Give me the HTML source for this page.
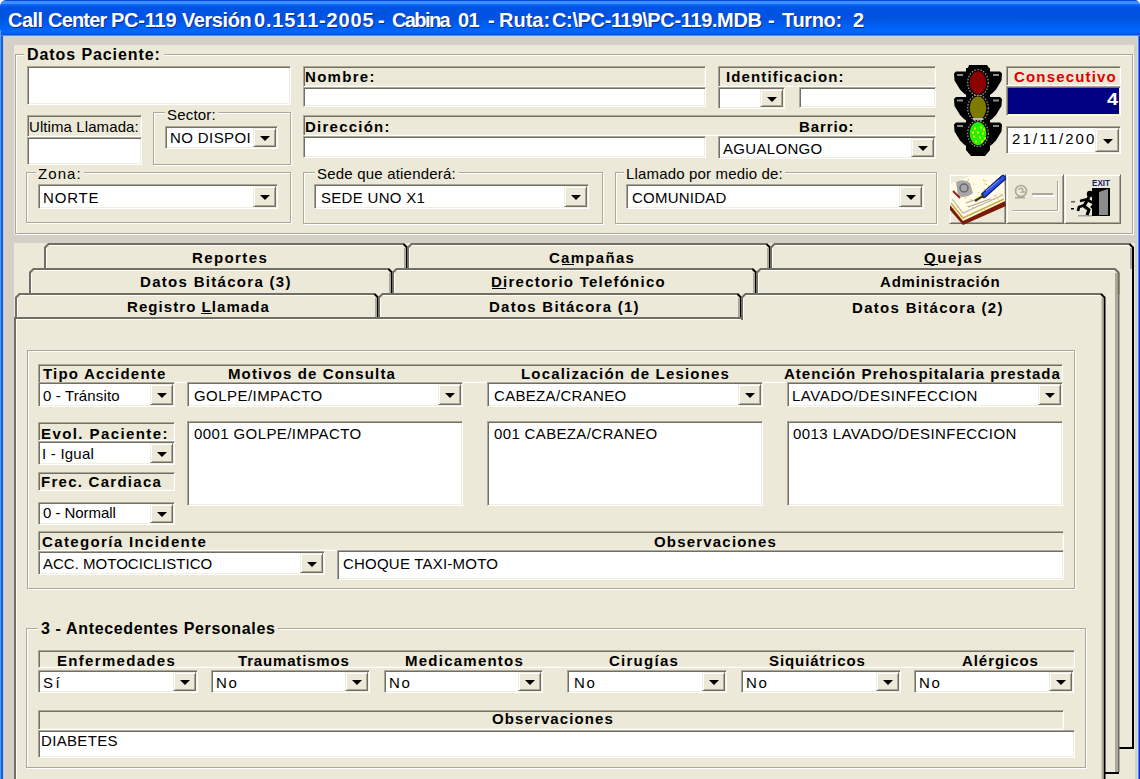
<!DOCTYPE html><html><head><meta charset="utf-8"><style>
*{margin:0;padding:0}
html,body{width:1140px;height:779px;overflow:hidden;background:#FFFFFF}
body{position:relative;font-family:"Liberation Sans",sans-serif}
.a{position:absolute;box-sizing:border-box}
.t{position:absolute;white-space:pre;line-height:1}
.sunk{border-style:solid;border-width:1px;border-color:#ACA899 #FFFFFF #FFFFFF #ACA899;box-shadow:inset 1px 1px 0 #716F64,inset -1px -1px 0 #F1EFE2}
.btn{background:#ECE9D8;border-style:solid;border-width:1px;border-color:#F1EFE2 #716F64 #716F64 #F1EFE2;box-shadow:inset 1px 1px 0 #FFFFFF,inset -1px -1px 0 #ACA899}
.grp{border:1px solid #ACA899;box-shadow:1px 1px 0 #FFFFFF,inset 1px 1px 0 #FFFFFF}
#title{background:linear-gradient(to bottom,#0A48D8 0px,#0A48D8 1px,#3C8FFF 1px,#3C8FFF 3.5px,#1068F8 4.5px,#0054E3 7px,#0052E0 18px,#0060F2 26px,#0066FF 31px,#0064FC 33px,#0A50D8 34px,#0A50D8 35px,#9CC0F4 36px)}
</style></head><body><div class="a" id="title" style="left:0;top:0;width:1140px;height:36px;border-radius:6px 5px 0 0"></div>
<div class="a" style="left:0;top:30px;width:1px;height:749px;background:#4A9AFF"></div><div class="a" style="left:1px;top:36px;width:2px;height:743px;background:#1C5CCC"></div>
<div class="a" style="left:1138px;top:36px;width:1px;height:743px;background:#4A86F0"></div><div class="a" style="left:1139px;top:36px;width:1px;height:743px;background:#0038C8"></div>
<div class="t" style="left:8.00px;top:10px;font-size:20px;font-weight:700;color:#fff;letter-spacing:-0.541px;text-shadow:1px 1px 0 #0A2A90">Call</div>
<div class="t" style="left:48.00px;top:10px;font-size:20px;font-weight:700;color:#fff;letter-spacing:-0.813px;text-shadow:1px 1px 0 #0A2A90">Center</div>
<div class="t" style="left:111.00px;top:10px;font-size:20px;font-weight:700;color:#fff;letter-spacing:-0.217px;text-shadow:1px 1px 0 #0A2A90">PC-119</div>
<div class="t" style="left:182.00px;top:10px;font-size:20px;font-weight:700;color:#fff;letter-spacing:-0.423px;text-shadow:1px 1px 0 #0A2A90">Versión</div>
<div class="t" style="left:254.00px;top:10px;font-size:20px;font-weight:700;color:#fff;letter-spacing:0.840px;text-shadow:1px 1px 0 #0A2A90">0.1511-2005</div>
<div class="t" style="left:378.00px;top:10px;font-size:20px;font-weight:700;color:#fff;letter-spacing:0.000px;text-shadow:1px 1px 0 #0A2A90">-</div>
<div class="t" style="left:392.00px;top:10px;font-size:20px;font-weight:700;color:#fff;letter-spacing:-1.611px;text-shadow:1px 1px 0 #0A2A90">Cabina</div>
<div class="t" style="left:458.00px;top:10px;font-size:20px;font-weight:700;color:#fff;letter-spacing:-0.623px;text-shadow:1px 1px 0 #0A2A90">01</div>
<div class="t" style="left:488.00px;top:10px;font-size:20px;font-weight:700;color:#fff;letter-spacing:0.000px;text-shadow:1px 1px 0 #0A2A90">-</div>
<div class="t" style="left:499.00px;top:10px;font-size:20px;font-weight:700;color:#fff;letter-spacing:0.014px;text-shadow:1px 1px 0 #0A2A90">Ruta:</div>
<div class="t" style="left:552.00px;top:10px;font-size:20px;font-weight:700;color:#fff;letter-spacing:-0.358px;text-shadow:1px 1px 0 #0A2A90">C:\PC-119\PC-119.MDB</div>
<div class="t" style="left:768.00px;top:10px;font-size:20px;font-weight:700;color:#fff;letter-spacing:0.000px;text-shadow:1px 1px 0 #0A2A90">-</div>
<div class="t" style="left:782.00px;top:10px;font-size:20px;font-weight:700;color:#fff;letter-spacing:-0.333px;text-shadow:1px 1px 0 #0A2A90">Turno:</div>
<div class="t" style="left:853.00px;top:10px;font-size:20px;font-weight:700;color:#fff;letter-spacing:0.000px;text-shadow:1px 1px 0 #0A2A90">2</div>
<div class="a" style="left:3px;top:36px;width:1135px;height:743px;background:#D4D0C8"></div>
<div class="a" style="left:3px;top:36px;width:1135px;height:1px;background:#C4D6F4"></div>
<div class="a" style="left:3px;top:36px;width:1px;height:743px;background:#B0CAF0"></div><div class="a" style="left:1137px;top:36px;width:1px;height:743px;background:#C8D8F0"></div>
<div class="a" style="left:4px;top:37px;width:2px;height:742px;background:#DCCFBC"></div>
<div class="a" style="left:14px;top:45px;width:1120px;height:190px;background:#ECE9D8"></div>
<div class="a grp" style="left:15px;top:54px;width:1118px;height:180px;"></div>
<div class="t" style="left:27.00px;top:47px;font-size:16px;font-weight:700;color:#000;letter-spacing:0.914px;background:#ECE9D8;padding:0 3px;margin-left:-3px">Datos Paciente:</div>
<div class="a sunk" style="left:27px;top:66px;width:264px;height:39px;background:#fff"></div>
<div class="a sunk" style="left:27px;top:115px;width:115px;height:22px;background:#ECE9D8"></div>
<div class="t" style="left:29.00px;top:119px;font-size:15px;font-weight:400;color:#000;letter-spacing:0.092px;">Ultima Llamada:</div>
<div class="a sunk" style="left:27px;top:137px;width:115px;height:28px;background:#fff"></div>
<div class="a grp" style="left:153px;top:112px;width:138px;height:53px;"></div>
<div class="t" style="left:167.00px;top:107px;font-size:15px;font-weight:400;color:#000;letter-spacing:0.191px;background:#ECE9D8;padding:0 2px;margin-left:-2px">Sector:</div>
<div class="a sunk" style="left:165px;top:126px;width:113px;height:23px;background:#fff"></div>
<div class="t" style="left:170.00px;top:130px;font-size:15px;font-weight:400;color:#000;letter-spacing:0.394px;">NO DISPOI</div>
<div class="a btn" style="left:253px;top:128px;width:23px;height:19px;"></div>
<div class="a" style="left:260px;top:136px;width:0;height:0;border-left:5px solid transparent;border-right:5px solid transparent;border-top:5.5px solid #000"></div>
<div class="a grp" style="left:26px;top:172px;width:265px;height:51px;"></div>
<div class="t" style="left:38.00px;top:166px;font-size:15px;font-weight:400;color:#000;letter-spacing:1.078px;background:#ECE9D8;padding:0 2px;margin-left:-2px">Zona:</div>
<div class="a sunk" style="left:38px;top:184px;width:240px;height:25px;background:#fff"></div>
<div class="t" style="left:43.00px;top:190px;font-size:15px;font-weight:400;color:#000;letter-spacing:0.819px;">NORTE</div>
<div class="a btn" style="left:253px;top:186px;width:23px;height:21px;"></div>
<div class="a" style="left:260px;top:195px;width:0;height:0;border-left:5px solid transparent;border-right:5px solid transparent;border-top:5.5px solid #000"></div>
<div class="a sunk" style="left:303px;top:66px;width:403px;height:21px;background:#ECE9D8"></div>
<div class="t" style="left:305.00px;top:69px;font-size:15px;font-weight:700;color:#000;letter-spacing:1.304px;">Nombre:</div>
<div class="a sunk" style="left:303px;top:87px;width:403px;height:20px;background:#fff"></div>
<div class="a sunk" style="left:718px;top:66px;width:218px;height:21px;background:#ECE9D8"></div>
<div class="t" style="left:726.00px;top:69px;font-size:15px;font-weight:700;color:#000;letter-spacing:1.130px;">Identificacion:</div>
<div class="a sunk" style="left:718px;top:87px;width:67px;height:22px;background:#fff"></div>
<div class="a btn" style="left:760px;top:89px;width:23px;height:18px;"></div>
<div class="a" style="left:767px;top:97px;width:0;height:0;border-left:5px solid transparent;border-right:5px solid transparent;border-top:5.5px solid #000"></div>
<div class="a sunk" style="left:799px;top:87px;width:137px;height:21px;background:#fff"></div>
<div class="a sunk" style="left:303px;top:115px;width:633px;height:21px;background:#ECE9D8"></div>
<div class="t" style="left:305.00px;top:119px;font-size:15px;font-weight:700;color:#000;letter-spacing:1.238px;">Dirección:</div>
<div class="t" style="left:799.00px;top:119px;font-size:15px;font-weight:700;color:#000;letter-spacing:0.887px;">Barrio:</div>
<div class="a sunk" style="left:303px;top:136px;width:403px;height:22px;background:#fff"></div>
<div class="a sunk" style="left:718px;top:136px;width:218px;height:23px;background:#fff"></div>
<div class="t" style="left:723.00px;top:141px;font-size:15px;font-weight:400;color:#000;letter-spacing:0.310px;">AGUALONGO</div>
<div class="a btn" style="left:911px;top:138px;width:23px;height:19px;"></div>
<div class="a" style="left:918px;top:146px;width:0;height:0;border-left:5px solid transparent;border-right:5px solid transparent;border-top:5.5px solid #000"></div>
<div class="a grp" style="left:303px;top:172px;width:300px;height:52px;"></div>
<div class="t" style="left:317.00px;top:166px;font-size:15px;font-weight:400;color:#000;letter-spacing:0.198px;background:#ECE9D8;padding:0 2px;margin-left:-2px">Sede que atienderá:</div>
<div class="a sunk" style="left:314px;top:184px;width:275px;height:25px;background:#fff"></div>
<div class="t" style="left:321.00px;top:190px;font-size:15px;font-weight:400;color:#000;letter-spacing:0.298px;">SEDE UNO X1</div>
<div class="a btn" style="left:564px;top:186px;width:23px;height:21px;"></div>
<div class="a" style="left:571px;top:195px;width:0;height:0;border-left:5px solid transparent;border-right:5px solid transparent;border-top:5.5px solid #000"></div>
<div class="a grp" style="left:615px;top:172px;width:322px;height:52px;"></div>
<div class="t" style="left:626.00px;top:166px;font-size:15px;font-weight:400;color:#000;letter-spacing:0.162px;background:#ECE9D8;padding:0 2px;margin-left:-2px">Llamado por medio de:</div>
<div class="a sunk" style="left:626px;top:184px;width:298px;height:25px;background:#fff"></div>
<div class="t" style="left:632.00px;top:190px;font-size:15px;font-weight:400;color:#000;letter-spacing:0.229px;">COMUNIDAD</div>
<div class="a btn" style="left:899px;top:186px;width:23px;height:21px;"></div>
<div class="a" style="left:906px;top:195px;width:0;height:0;border-left:5px solid transparent;border-right:5px solid transparent;border-top:5.5px solid #000"></div>
<svg class="a" style="left:950px;top:62px" width="56" height="98"><polygon points="19,3 37,3 39,6 40,6 40,88 35,94 21,94 16,88 16,6 18,6" fill="#000" /><polygon points="6,9.5 17,9.5 17,33.5 14,31.5 10,27.5 7,22.5 4.5,18.5 4,11.5" fill="#000" /><polygon points="50,9.5 39,9.5 39,33.5 42,31.5 46,27.5 49,22.5 51.5,18.5 52,11.5" fill="#000" /><rect x="7" y="12.0" width="6" height="2" fill="#8a8a8a"/><rect x="43" y="12.0" width="6" height="2" fill="#8a8a8a"/><polygon points="6,35 17,35 17,59 14,57 10,53 7,48 4.5,44 4,37" fill="#000" /><polygon points="50,35 39,35 39,59 42,57 46,53 49,48 51.5,44 52,37" fill="#000" /><rect x="7" y="37.5" width="6" height="2" fill="#8a8a8a"/><rect x="43" y="37.5" width="6" height="2" fill="#8a8a8a"/><polygon points="6,60.5 17,60.5 17,84.5 14,82.5 10,78.5 7,73.5 4.5,69.5 4,62.5" fill="#000" /><polygon points="50,60.5 39,60.5 39,84.5 42,82.5 46,78.5 49,73.5 51.5,69.5 52,62.5" fill="#000" /><rect x="7" y="63.0" width="6" height="2" fill="#8a8a8a"/><rect x="43" y="63.0" width="6" height="2" fill="#8a8a8a"/><ellipse cx="28" cy="20.700000000000003" rx="10.3" ry="13" fill="none" stroke="#9A9A9A" stroke-width="1.2" stroke-dasharray="1.6 1.4"/><ellipse cx="28" cy="20.700000000000003" rx="8.3" ry="11.5" fill="#8B0000"/><ellipse cx="28" cy="46" rx="10.3" ry="13" fill="none" stroke="#9A9A9A" stroke-width="1.2" stroke-dasharray="1.6 1.4"/><ellipse cx="28" cy="46" rx="8.3" ry="11.5" fill="#7E7A00"/><ellipse cx="28" cy="71.5" rx="10.3" ry="13" fill="none" stroke="#9A9A9A" stroke-width="1.2" stroke-dasharray="1.6 1.4"/><ellipse cx="28" cy="71.5" rx="8.3" ry="11.5" fill="#22EE00"/><rect x="24" y="65.5" width="2" height="2" fill="#E8F000"/><rect x="30" y="64.5" width="2" height="2" fill="#E8F000"/><rect x="27" y="69.5" width="2" height="2" fill="#E8F000"/><rect x="32" y="70.5" width="2" height="2" fill="#E8F000"/><rect x="23" y="73.5" width="2" height="2" fill="#E8F000"/><rect x="29" y="74.5" width="2" height="2" fill="#E8F000"/><rect x="25" y="78.5" width="2" height="2" fill="#E8F000"/><rect x="31" y="78.5" width="2" height="2" fill="#E8F000"/><rect x="33" y="66.5" width="2" height="2" fill="#E8F000"/><rect x="22" y="69.5" width="2" height="2" fill="#E8F000"/><rect x="34" y="75.5" width="2" height="2" fill="#E8F000"/><rect x="23" y="56" width="10" height="2" fill="#b8b8b8"/></svg>
<div class="a sunk" style="left:1006px;top:66px;width:115px;height:20px;background:#ECE9D8"></div>
<div class="t" style="left:1014.00px;top:69px;font-size:15px;font-weight:700;color:#E00000;letter-spacing:1.165px;">Consecutivo</div>
<div class="a sunk" style="left:1006px;top:86px;width:115px;height:30px;background:#000080"></div>
<div class="t" style="left:1107.00px;top:92px;font-size:16px;font-weight:700;color:#fff;letter-spacing:0.000px;transform:scaleX(1.25);transform-origin:0 0">4</div>
<div class="a sunk" style="left:1006px;top:126px;width:115px;height:28px;background:#fff"></div>
<div class="t" style="left:1012.00px;top:131px;font-size:15px;font-weight:400;color:#000;letter-spacing:2.098px;">21/11/2005</div>
<div class="a btn" style="left:1095px;top:128px;width:24px;height:24px;"></div>
<div class="a" style="left:1103px;top:139px;width:0;height:0;border-left:5px solid transparent;border-right:5px solid transparent;border-top:5.5px solid #000"></div>
<div class="a btn" style="left:949px;top:174px;width:57px;height:50px;"></div>
<div class="a btn" style="left:1006px;top:174px;width:58px;height:50px;"></div>
<div class="a btn" style="left:1064px;top:174px;width:57px;height:50px;"></div>
<svg class="a" style="left:0;top:0" width="1140" height="779"><polygon points="951,183 971,176 1004,176 1005,202 963,221 951,206" fill="#FFFBE6"/><rect x="964.7" y="197.6" width="1.2" height="1.2" fill="#D8C860"/><rect x="971.1" y="199.7" width="1.2" height="1.2" fill="#D8C860"/><rect x="983.7" y="180.4" width="1.2" height="1.2" fill="#D8C860"/><rect x="953.6" y="208.1" width="1.2" height="1.2" fill="#D8C860"/><rect x="965.7" y="186.4" width="1.2" height="1.2" fill="#D8C860"/><rect x="1001.8" y="194.9" width="1.2" height="1.2" fill="#D8C860"/><rect x="994.0" y="195.1" width="1.2" height="1.2" fill="#D8C860"/><rect x="984.3" y="183.4" width="1.2" height="1.2" fill="#D8C860"/><rect x="984.1" y="209.2" width="1.2" height="1.2" fill="#D8C860"/><rect x="978.6" y="204.7" width="1.2" height="1.2" fill="#D8C860"/><rect x="985.9" y="180.3" width="1.2" height="1.2" fill="#D8C860"/><rect x="990.2" y="199.3" width="1.2" height="1.2" fill="#D8C860"/><rect x="967.8" y="179.1" width="1.2" height="1.2" fill="#D8C860"/><rect x="995.4" y="195.0" width="1.2" height="1.2" fill="#D8C860"/><rect x="972.4" y="206.8" width="1.2" height="1.2" fill="#D8C860"/><rect x="974.8" y="211.7" width="1.2" height="1.2" fill="#D8C860"/><rect x="996.1" y="181.5" width="1.2" height="1.2" fill="#D8C860"/><rect x="959.7" y="185.8" width="1.2" height="1.2" fill="#D8C860"/><rect x="1000.3" y="193.7" width="1.2" height="1.2" fill="#D8C860"/><rect x="983.7" y="188.8" width="1.2" height="1.2" fill="#D8C860"/><rect x="977.9" y="191.9" width="1.2" height="1.2" fill="#D8C860"/><rect x="970.2" y="199.1" width="1.2" height="1.2" fill="#D8C860"/><rect x="981.6" y="210.6" width="1.2" height="1.2" fill="#D8C860"/><rect x="985.9" y="183.9" width="1.2" height="1.2" fill="#D8C860"/><rect x="997.3" y="198.5" width="1.2" height="1.2" fill="#D8C860"/><rect x="988.0" y="185.6" width="1.2" height="1.2" fill="#D8C860"/><rect x="993.7" y="198.6" width="1.2" height="1.2" fill="#D8C860"/><rect x="967.0" y="180.3" width="1.2" height="1.2" fill="#D8C860"/><rect x="957.3" y="206.8" width="1.2" height="1.2" fill="#D8C860"/><rect x="973.1" y="183.4" width="1.2" height="1.2" fill="#D8C860"/><rect x="967.4" y="205.7" width="1.2" height="1.2" fill="#D8C860"/><rect x="995.8" y="179.6" width="1.2" height="1.2" fill="#D8C860"/><rect x="983.1" y="179.6" width="1.2" height="1.2" fill="#D8C860"/><rect x="988.2" y="189.9" width="1.2" height="1.2" fill="#D8C860"/><polygon points="950,205 963,221 1005,201 1006,206 963,225 950,210" fill="#7A1A08"/><polyline points="951,203 963,218 1004,199" fill="none" stroke="#C8B040" stroke-width="1.5"/><polyline points="952,199 963,213 1003,195" fill="none" stroke="#B8B4A0" stroke-width="1.2"/><path d="M956 182Q963 178 970 183L973 193Q966 199 958 196Z" fill="#A8A8A8"/><circle cx="964" cy="188" r="4" fill="none" stroke="#6A6A6A" stroke-width="1.5"/><path d="M953 191L960 198" stroke="#9A2020" stroke-width="2"/><path d="M966 203L986 196M968 207L990 199" stroke="#A8A8A0" stroke-width="1.2"/><path d="M984 195L1003 178" stroke="#10187A" stroke-width="6" stroke-linecap="round"/><path d="M984 195L1003 178" stroke="#2A52E8" stroke-width="3.6" stroke-linecap="round"/><path d="M986 191L999 180" stroke="#8AA8FF" stroke-width="1"/><path d="M975 201L984 195" stroke="#303000" stroke-width="2.2"/><path d="M977 198L982 195" stroke="#D8D070" stroke-width="1"/><path d="M1013.5 211.5H1058.5V182" fill="none" stroke="#FFFFFF"/><path d="M1012.5 210.5H1057.5V181" fill="none" stroke="#ACA899"/><rect x="1033" y="195" width="22" height="2" fill="#FFFFFF"/><rect x="1032" y="193" width="21" height="2" fill="#ACA899"/><circle cx="1021" cy="191" r="5.5" fill="none" stroke="#ACA899" stroke-width="1.6"/><path d="M1019 190a2 2 0 1 1 3 2h3" fill="none" stroke="#ACA899" stroke-width="1.3"/><rect x="1015" y="197" width="10" height="1.5" fill="#ACA899"/><text x="1092" y="185.5" font-family="Liberation Sans" font-weight="700" font-size="8.5" fill="#14206E" textLength="18" lengthAdjust="spacingAndGlyphs">EXIT</text><rect x="1092" y="188" width="18" height="28" fill="#000"/><polygon points="1099,192 1108,189 1108,215 1099,215" fill="#8C8C8C"/><rect x="1078" y="215" width="14" height="1.5" fill="#A0A0A0"/><circle cx="1090" cy="194" r="3.2" fill="#000"/><path d="M1089 197L1084 206L1089 210L1087 215" fill="none" stroke="#000" stroke-width="3.2" stroke-linejoin="round"/><path d="M1085 205L1079 207L1078 211" fill="none" stroke="#000" stroke-width="2.8" stroke-linejoin="round"/><path d="M1088 199L1080 201M1087 200L1096 204" fill="none" stroke="#000" stroke-width="2.5"/><path d="M1091 206L1096 211L1093 215" fill="none" stroke="#000" stroke-width="2.5"/><rect x="1071" y="201" width="4" height="1.5" fill="#606060"/><rect x="1071" y="208" width="3" height="1.5" fill="#000"/></svg>
<div class="a" style="left:14px;top:243px;width:1121px;height:536px;background:#ECE9D8"></div>
<svg class="a" style="left:0;top:0" width="1140" height="779" fill="none"><path d="M1133 248V748H1119" stroke="#000000" stroke-width="2"/><path d="M1116 273V772" stroke="#ACA899" stroke-width="2"/><path d="M1118.5 273V772" stroke="#716F64" stroke-width="2"/><path d="M1105 773H1119" stroke="#000000" stroke-width="2"/><path d="M45 269V247.5L48.5 244H404" stroke="#716F64" stroke-width="2"/><path d="M46.5 269V248M49 245.5H403" stroke="#FFFFFF"/><path d="M403.5 244L407 247.5V269" stroke="#000000" stroke-width="2"/><path d="M405 248V269" stroke="#ACA899" stroke-width="2"/><path d="M408 269V247.5L411.5 244H767" stroke="#716F64" stroke-width="2"/><path d="M409.5 269V248M412 245.5H766" stroke="#FFFFFF"/><path d="M766.5 244L770 247.5V269" stroke="#000000" stroke-width="2"/><path d="M768 248V269" stroke="#ACA899" stroke-width="2"/><path d="M771 269V247.5L774.5 244H1130" stroke="#716F64" stroke-width="2"/><path d="M772.5 269V248M775 245.5H1129" stroke="#FFFFFF"/><path d="M1129.5 244L1133 247.5V269" stroke="#000000" stroke-width="2"/><path d="M1131 248V269" stroke="#ACA899" stroke-width="2"/><path d="M30 294V272.5L33.5 269H389" stroke="#716F64" stroke-width="2"/><path d="M31.5 294V273M34 270.5H388" stroke="#FFFFFF"/><path d="M388.5 269L392 272.5V294" stroke="#000000" stroke-width="2"/><path d="M390 273V294" stroke="#ACA899" stroke-width="2"/><path d="M393 294V272.5L396.5 269H753" stroke="#716F64" stroke-width="2"/><path d="M394.5 294V273M397 270.5H752" stroke="#FFFFFF"/><path d="M752.5 269L756 272.5V294" stroke="#000000" stroke-width="2"/><path d="M754 273V294" stroke="#ACA899" stroke-width="2"/><path d="M757 294V272.5L760.5 269H1115.5" stroke="#716F64" stroke-width="2"/><path d="M758.5 294V273M761 270.5H1114.5" stroke="#FFFFFF"/><path d="M1115.0 269L1118.5 272.5V294" stroke="#716F64" stroke-width="2"/><path d="M1116.5 273V294" stroke="#ACA899" stroke-width="2"/><path d="M16 318V297.5L19.5 294H375" stroke="#716F64" stroke-width="2"/><path d="M17.5 318V298M20 295.5H374" stroke="#FFFFFF"/><path d="M374.5 294L378 297.5V318" stroke="#000000" stroke-width="2"/><path d="M376 298V318" stroke="#ACA899" stroke-width="2"/><path d="M379 318V297.5L382.5 294H738" stroke="#716F64" stroke-width="2"/><path d="M380.5 318V298M383 295.5H737" stroke="#FFFFFF"/><path d="M737.5 294L741 297.5V318" stroke="#000000" stroke-width="2"/><path d="M739 298V318" stroke="#ACA899" stroke-width="2"/><path d="M15 779V318H742" stroke="#716F64" stroke-width="2"/><path d="M16.5 779V319.5H742" stroke="#FFFFFF"/><path d="M742 320V297.5L745.5 294H1101.5" stroke="#716F64" stroke-width="2"/><path d="M743.5 320V298M746 295.5H1100.5" stroke="#FFFFFF"/><path d="M1101.0 294L1104.5 297.5V779" stroke="#000000" stroke-width="2"/><path d="M1102.5 298V779" stroke="#ACA899" stroke-width="2"/></svg>
<div class="t" style="left:192.00px;top:250px;font-size:15px;font-weight:700;color:#000;letter-spacing:1.404px;">Reportes</div>
<div class="t" style="left:549.00px;top:250px;font-size:15px;font-weight:700;color:#000;letter-spacing:1.283px;">Campañas</div>
<div class="t" style="left:924.00px;top:250px;font-size:15px;font-weight:700;color:#000;letter-spacing:1.564px;">Quejas</div>
<div class="t" style="left:140.00px;top:274px;font-size:15px;font-weight:700;color:#000;letter-spacing:1.302px;">Datos Bitácora (3)</div>
<div class="t" style="left:491.00px;top:274px;font-size:15px;font-weight:700;color:#000;letter-spacing:1.238px;">Directorio Telefónico</div>
<div class="t" style="left:880.00px;top:274px;font-size:15px;font-weight:700;color:#000;letter-spacing:0.806px;">Administración</div>
<div class="t" style="left:127.00px;top:299px;font-size:15px;font-weight:700;color:#000;letter-spacing:1.065px;">Registro Llamada</div>
<div class="t" style="left:489.00px;top:299px;font-size:15px;font-weight:700;color:#000;letter-spacing:1.243px;">Datos Bitácora (1)</div>
<div class="t" style="left:852.00px;top:300px;font-size:15px;font-weight:700;color:#000;letter-spacing:1.302px;">Datos Bitácora (2)</div>
<div class="a" style="left:201px;top:313px;width:11px;height:1px;background:#000"></div>
<div class="a" style="left:562px;top:264px;width:12px;height:1px;background:#000"></div>
<div class="a" style="left:492px;top:288px;width:14px;height:1px;background:#000"></div>
<div class="a" style="left:924px;top:264px;width:14px;height:1px;background:#000"></div>
<div class="a grp" style="left:27px;top:350px;width:1048px;height:239px;"></div>
<div class="a sunk" style="left:38px;top:364px;width:1025px;height:19px;background:#ECE9D8"></div>
<div class="t" style="left:43.00px;top:366px;font-size:15px;font-weight:700;color:#000;letter-spacing:1.200px;">Tipo Accidente</div>
<div class="t" style="left:228.00px;top:366px;font-size:15px;font-weight:700;color:#000;letter-spacing:1.120px;">Motivos de Consulta</div>
<div class="t" style="left:521.00px;top:366px;font-size:15px;font-weight:700;color:#000;letter-spacing:1.172px;">Localización de Lesiones</div>
<div class="t" style="left:784.00px;top:366px;font-size:15px;font-weight:700;color:#000;letter-spacing:1.014px;">Atención Prehospitalaria prestada</div>
<div class="a sunk" style="left:38px;top:382px;width:137px;height:25px;background:#fff"></div>
<div class="t" style="left:43.00px;top:388px;font-size:15px;font-weight:400;color:#000;letter-spacing:0.140px;">0 - Tránsito</div>
<div class="a btn" style="left:150px;top:384px;width:23px;height:21px;"></div>
<div class="a" style="left:157px;top:393px;width:0;height:0;border-left:5px solid transparent;border-right:5px solid transparent;border-top:5.5px solid #000"></div>
<div class="a sunk" style="left:187px;top:382px;width:276px;height:25px;background:#fff"></div>
<div class="t" style="left:194.00px;top:388px;font-size:15px;font-weight:400;color:#000;letter-spacing:0.447px;">GOLPE/IMPACTO</div>
<div class="a btn" style="left:438px;top:384px;width:23px;height:21px;"></div>
<div class="a" style="left:445px;top:393px;width:0;height:0;border-left:5px solid transparent;border-right:5px solid transparent;border-top:5.5px solid #000"></div>
<div class="a sunk" style="left:487px;top:382px;width:276px;height:25px;background:#fff"></div>
<div class="t" style="left:494.00px;top:388px;font-size:15px;font-weight:400;color:#000;letter-spacing:0.318px;">CABEZA/CRANEO</div>
<div class="a btn" style="left:738px;top:384px;width:23px;height:21px;"></div>
<div class="a" style="left:745px;top:393px;width:0;height:0;border-left:5px solid transparent;border-right:5px solid transparent;border-top:5.5px solid #000"></div>
<div class="a sunk" style="left:787px;top:382px;width:276px;height:25px;background:#fff"></div>
<div class="t" style="left:792.00px;top:388px;font-size:15px;font-weight:400;color:#000;letter-spacing:0.511px;">LAVADO/DESINFECCION</div>
<div class="a btn" style="left:1038px;top:384px;width:23px;height:21px;"></div>
<div class="a" style="left:1045px;top:393px;width:0;height:0;border-left:5px solid transparent;border-right:5px solid transparent;border-top:5.5px solid #000"></div>
<div class="a sunk" style="left:38px;top:422px;width:137px;height:19px;background:#ECE9D8"></div>
<div class="t" style="left:41.00px;top:426px;font-size:15px;font-weight:700;color:#000;letter-spacing:1.413px;">Evol. Paciente:</div>
<div class="a sunk" style="left:38px;top:441px;width:137px;height:24px;background:#fff"></div>
<div class="t" style="left:42.00px;top:446px;font-size:15px;font-weight:400;color:#000;letter-spacing:0.226px;">I - Igual</div>
<div class="a btn" style="left:150px;top:443px;width:23px;height:20px;"></div>
<div class="a" style="left:157px;top:452px;width:0;height:0;border-left:5px solid transparent;border-right:5px solid transparent;border-top:5.5px solid #000"></div>
<div class="a sunk" style="left:38px;top:472px;width:137px;height:19px;background:#ECE9D8"></div>
<div class="t" style="left:41.00px;top:474px;font-size:15px;font-weight:700;color:#000;letter-spacing:1.266px;">Frec. Cardiaca</div>
<div class="a sunk" style="left:38px;top:502px;width:137px;height:23px;background:#fff"></div>
<div class="t" style="left:43.00px;top:505px;font-size:15px;font-weight:400;color:#000;letter-spacing:-0.051px;">0 - Normall</div>
<div class="a btn" style="left:150px;top:504px;width:23px;height:19px;"></div>
<div class="a" style="left:157px;top:512px;width:0;height:0;border-left:5px solid transparent;border-right:5px solid transparent;border-top:5.5px solid #000"></div>
<div class="a sunk" style="left:187px;top:421px;width:276px;height:85px;background:#fff"></div>
<div class="t" style="left:194.00px;top:426px;font-size:15px;font-weight:400;color:#000;letter-spacing:0.402px;">0001 GOLPE/IMPACTO</div>
<div class="a sunk" style="left:487px;top:421px;width:276px;height:85px;background:#fff"></div>
<div class="t" style="left:494.00px;top:426px;font-size:15px;font-weight:400;color:#000;letter-spacing:0.351px;">001 CABEZA/CRANEO</div>
<div class="a sunk" style="left:787px;top:421px;width:276px;height:85px;background:#fff"></div>
<div class="t" style="left:793.00px;top:426px;font-size:15px;font-weight:400;color:#000;letter-spacing:0.420px;">0013 LAVADO/DESINFECCION</div>
<div class="a sunk" style="left:38px;top:531px;width:1026px;height:20px;background:#ECE9D8"></div>
<div class="t" style="left:42.00px;top:534px;font-size:15px;font-weight:700;color:#000;letter-spacing:1.369px;">Categoría Incidente</div>
<div class="t" style="left:654.00px;top:534px;font-size:15px;font-weight:700;color:#000;letter-spacing:1.191px;">Observaciones</div>
<div class="a sunk" style="left:38px;top:551px;width:287px;height:24px;background:#fff"></div>
<div class="t" style="left:43.00px;top:556px;font-size:15px;font-weight:400;color:#000;letter-spacing:0.015px;">ACC. MOTOCICLISTICO</div>
<div class="a btn" style="left:300px;top:553px;width:23px;height:20px;"></div>
<div class="a" style="left:307px;top:562px;width:0;height:0;border-left:5px solid transparent;border-right:5px solid transparent;border-top:5.5px solid #000"></div>
<div class="a sunk" style="left:337px;top:550px;width:727px;height:30px;background:#fff"></div>
<div class="t" style="left:343.00px;top:556px;font-size:15px;font-weight:400;color:#000;letter-spacing:0.215px;">CHOQUE TAXI-MOTO</div>
<div class="a grp" style="left:26px;top:628px;width:1060px;height:140px;"></div>
<div class="t" style="left:41.00px;top:621px;font-size:16px;font-weight:700;color:#000;letter-spacing:0.636px;background:#ECE9D8;padding:0 3px;margin-left:-3px">3 - Antecedentes Personales</div>
<div class="a sunk" style="left:38px;top:650px;width:1037px;height:18px;background:#ECE9D8"></div>
<div class="t" style="left:57.00px;top:653px;font-size:15px;font-weight:700;color:#000;letter-spacing:1.315px;">Enfermedades</div>
<div class="a sunk" style="left:38px;top:670px;width:160px;height:23px;background:#fff"></div>
<div class="t" style="left:43.00px;top:675px;font-size:15px;font-weight:400;color:#000;letter-spacing:2.495px;">Sí</div>
<div class="a btn" style="left:173px;top:672px;width:23px;height:19px;"></div>
<div class="a" style="left:180px;top:680px;width:0;height:0;border-left:5px solid transparent;border-right:5px solid transparent;border-top:5.5px solid #000"></div>
<div class="t" style="left:238.00px;top:653px;font-size:15px;font-weight:700;color:#000;letter-spacing:0.831px;">Traumatismos</div>
<div class="a sunk" style="left:211px;top:670px;width:159px;height:23px;background:#fff"></div>
<div class="t" style="left:216.00px;top:675px;font-size:15px;font-weight:400;color:#000;letter-spacing:1.667px;">No</div>
<div class="a btn" style="left:345px;top:672px;width:23px;height:19px;"></div>
<div class="a" style="left:352px;top:680px;width:0;height:0;border-left:5px solid transparent;border-right:5px solid transparent;border-top:5.5px solid #000"></div>
<div class="t" style="left:405.00px;top:653px;font-size:15px;font-weight:700;color:#000;letter-spacing:1.241px;">Medicamentos</div>
<div class="a sunk" style="left:384px;top:670px;width:159px;height:23px;background:#fff"></div>
<div class="t" style="left:389.00px;top:675px;font-size:15px;font-weight:400;color:#000;letter-spacing:1.667px;">No</div>
<div class="a btn" style="left:518px;top:672px;width:23px;height:19px;"></div>
<div class="a" style="left:525px;top:680px;width:0;height:0;border-left:5px solid transparent;border-right:5px solid transparent;border-top:5.5px solid #000"></div>
<div class="t" style="left:609.00px;top:653px;font-size:15px;font-weight:700;color:#000;letter-spacing:1.261px;">Cirugías</div>
<div class="a sunk" style="left:567px;top:670px;width:160px;height:23px;background:#fff"></div>
<div class="t" style="left:574.00px;top:675px;font-size:15px;font-weight:400;color:#000;letter-spacing:1.667px;">No</div>
<div class="a btn" style="left:702px;top:672px;width:23px;height:19px;"></div>
<div class="a" style="left:709px;top:680px;width:0;height:0;border-left:5px solid transparent;border-right:5px solid transparent;border-top:5.5px solid #000"></div>
<div class="t" style="left:769.00px;top:653px;font-size:15px;font-weight:700;color:#000;letter-spacing:0.908px;">Siquiátricos</div>
<div class="a sunk" style="left:741px;top:670px;width:160px;height:23px;background:#fff"></div>
<div class="t" style="left:746.00px;top:675px;font-size:15px;font-weight:400;color:#000;letter-spacing:1.667px;">No</div>
<div class="a btn" style="left:876px;top:672px;width:23px;height:19px;"></div>
<div class="a" style="left:883px;top:680px;width:0;height:0;border-left:5px solid transparent;border-right:5px solid transparent;border-top:5.5px solid #000"></div>
<div class="t" style="left:962.00px;top:653px;font-size:15px;font-weight:700;color:#000;letter-spacing:0.936px;">Alérgicos</div>
<div class="a sunk" style="left:914px;top:670px;width:160px;height:23px;background:#fff"></div>
<div class="t" style="left:919.00px;top:675px;font-size:15px;font-weight:400;color:#000;letter-spacing:1.667px;">No</div>
<div class="a btn" style="left:1049px;top:672px;width:23px;height:19px;"></div>
<div class="a" style="left:1056px;top:680px;width:0;height:0;border-left:5px solid transparent;border-right:5px solid transparent;border-top:5.5px solid #000"></div>
<div class="a sunk" style="left:38px;top:710px;width:1026px;height:20px;background:#ECE9D8"></div>
<div class="t" style="left:492.00px;top:711px;font-size:15px;font-weight:700;color:#000;letter-spacing:1.107px;">Observaciones</div>
<div class="a sunk" style="left:38px;top:730px;width:1037px;height:28px;background:#fff"></div>
<div class="t" style="left:41.00px;top:733px;font-size:15px;font-weight:400;color:#000;letter-spacing:0.331px;">DIABETES</div></body></html>
